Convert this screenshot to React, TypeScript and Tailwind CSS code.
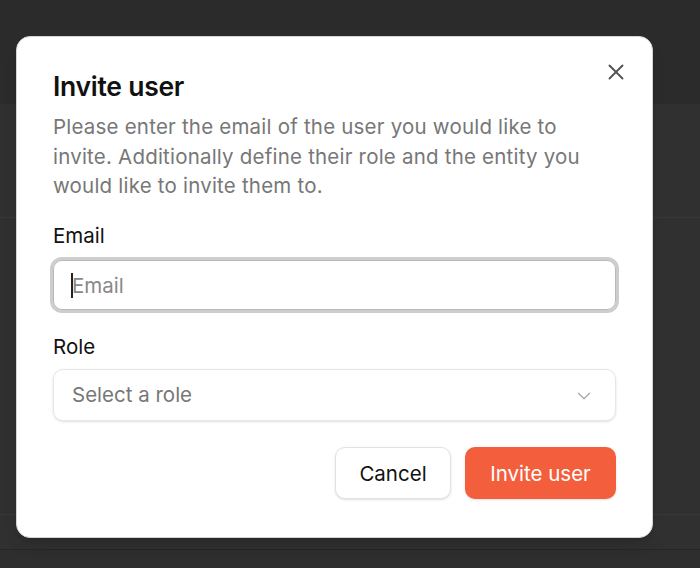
import { X, ChevronDown } from 'lucide-react'

export default function App() {
  return (
    <div className="relative h-[568px] w-[700px] overflow-hidden bg-[#303030]" style={{ fontFamily: 'Inter, "Noto Sans", sans-serif' }}>
      {/* page behind the modal */}
      <div className="flex h-full flex-col">
        <div className="h-[104px] bg-[#2b2b2b]" />
        <div className="h-[114px] border-b border-[#383838]" />
        <div className="h-[297px] border-b border-[#383838]" />
        <div className="h-[35px] border-b border-[#262626]" />
        <div className="flex-1 bg-[#2e2e2e]" />
      </div>

      {/* dialog */}
      <div className="absolute left-[16px] top-[36px] w-[637px] rounded-[14px] border border-[#d4d4d4] bg-white px-[36px] pb-[38px] pt-[32px] shadow-lg">
        <button className="absolute right-[23px] top-[22px] text-[#555]">
          <X className="h-[26px] w-[26px]" strokeWidth={1.75} />
        </button>

        <h2 className="text-[26.5px] font-semibold leading-[34px] tracking-[-0.01em] text-[#111]">Invite user</h2>
        <p className="mt-[9px] pr-[14px] text-[20.5px] leading-[29.5px] tracking-[0.01em] text-[#777]">
          Please enter the email of the user you would like to invite. Additionally define their role and the entity you would like to invite them to.
        </p>

        <div className="mt-[20px]">
          <label className="block text-[20.5px] leading-[30px] text-[#111]">Email</label>
          <div className="relative mt-[9px] flex h-[50px] items-center rounded-[9px] border border-[#b8b8b8] px-[18px] pt-[3px] text-[20.5px] text-[#888] ring-[3px] ring-[#cdcdcd]">
            Email
            <span className="absolute left-[17px] top-[12px] h-[25px] w-[2px] bg-[#222]" />
          </div>
        </div>

        <div className="mt-[22px]">
          <label className="block text-[20.5px] leading-[30px] text-[#111]">Role</label>
          <div className="mt-[7px] flex h-[52px] items-center justify-between rounded-[10px] border border-[#e6e6e6] pl-[18px] pr-[20px] pt-[2px] text-[20.5px] text-[#777] shadow-sm">
            <span>Select a role</span>
            <ChevronDown className="h-[22px] w-[22px] text-[#aaa]" strokeWidth={1.5} />
          </div>
        </div>

        <div className="mt-[26px] flex justify-end gap-[14px]">
          <button className="h-[52px] w-[116px] rounded-[10px] border border-[#e2e2e2] bg-white pt-[3px] text-[20.5px] text-[#111] shadow-sm">
            Cancel
          </button>
          <button className="h-[52px] w-[151px] rounded-[10px] bg-[#f35f3d] pt-[3px] text-[20.5px] text-white shadow-sm">
            Invite user
          </button>
        </div>
      </div>
    </div>
  )
}
